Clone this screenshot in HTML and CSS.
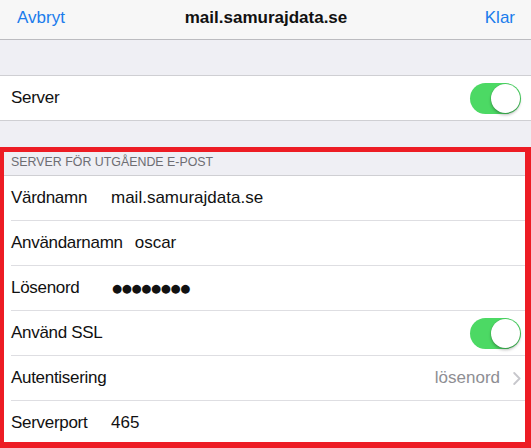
FILE: index.html
```html
<!DOCTYPE html>
<html lang="sv">
<head>
<meta charset="utf-8">
<title>mail.samurajdata.se</title>
<link rel="stylesheet" href="styles.css">
</head>
<body>
<div class="screen">
  <header class="navbar">
    <span class="nav-btn">Avbryt</span>
    <h1 class="nav-title">mail.samurajdata.se</h1>
    <span class="nav-btn nav-done">Klar</span>
  </header>

  <section class="group group-first">
    <div class="row">
      <div class="row-inner">
        <span class="label">Server</span>
        <span class="toggle"></span>
      </div>
    </div>
  </section>

  <div class="section-header">SERVER FÖR UTGÅENDE E-POST</div>

  <section class="group">
    <div class="row">
      <div class="row-inner">
        <span class="label">Värdnamn</span>
        <span class="value">mail.samurajdata.se</span>
      </div>
    </div>
    <div class="row">
      <div class="row-inner">
        <span class="label">Användarnamn</span>
        <span class="value">oscar</span>
      </div>
    </div>
    <div class="row">
      <div class="row-inner">
        <span class="label">Lösenord</span>
        <span class="value dots">●●●●●●●●</span>
      </div>
    </div>
    <div class="row">
      <div class="row-inner">
        <span class="label">Använd SSL</span>
        <span class="toggle"></span>
      </div>
    </div>
    <div class="row">
      <div class="row-inner">
        <span class="label">Autentisering</span>
        <span class="detail">lösenord</span>
        <svg class="chevron" width="8" height="13" viewBox="0 0 8 13"><path d="M1.2 1 L6.6 6.5 L1.2 12" fill="none" stroke="#c7c7cc" stroke-width="1.8" stroke-linecap="round" stroke-linejoin="round"/></svg>
      </div>
    </div>
    <div class="row">
      <div class="row-inner">
        <span class="label">Serverport</span>
        <span class="value">465</span>
      </div>
    </div>
  </section>

  <div class="highlight"></div>
</div>
</body>
</html>
```

FILE: styles.css
```css
html, body {
  margin: 0;
  padding: 0;
}

body {
  background: #efeff4;
  font-family: "Liberation Sans", Arial, sans-serif;
  font-size: 17px;
  color: #000;
  width: 531px;
  height: 448px;
  overflow: hidden;
}

.screen {
  position: relative;
  height: 448px;
  overflow: hidden;
}

.navbar {
  height: 35px;
  padding: 0 16px 4px 17px;
  display: grid;
  grid-template-columns: 1fr auto 1fr;
  align-items: center;
  background: #f7f7f7;
  border-bottom: 1px solid #bcbcc0;
}

.nav-btn {
  color: #1b7cec;
}

.nav-done {
  justify-self: end;
}

.nav-title {
  margin: 0;
  font-size: 17px;
  font-weight: 700;
  color: #111;
}

.group {
  background: #fff;
  border-top: 1px solid #cfcfd3;
  border-bottom: 1px solid #cfcfd3;
}

.group-first {
  margin-top: 35px;
}

.section-header {
  height: 54px;
  box-sizing: border-box;
  display: flex;
  align-items: flex-end;
  padding: 0 11px 6px;
  font-size: 12.4px;
  color: #6d6d72;
}

.row {
  padding-left: 11px;
}

.row-inner {
  height: 44px;
  display: flex;
  align-items: center;
  padding-right: 10px;
}

.row + .row .row-inner {
  border-top: 1px solid #dedee2;
}

.label {
  min-width: 88px;
  margin-right: 12px;
  letter-spacing: -0.3px;
  color: #111;
}

.value {
  color: #111;
}

.dots {
  font-family: "DejaVu Sans", sans-serif;
  font-size: 11.5px;
  letter-spacing: -0.3px;
  padding-left: 1px;
}

.detail {
  margin-left: auto;
  color: #8e8e93;
  margin-right: 13px;
}

.chevron {
  display: block;
}

.toggle {
  margin-left: auto;
  width: 51px;
  height: 31px;
  border-radius: 16px;
  background: #4cd964;
  position: relative;
}

.toggle::after {
  content: "";
  position: absolute;
  right: 1px;
  top: 1px;
  width: 29px;
  height: 29px;
  border-radius: 50%;
  background: #fff;
  box-shadow: 0 2px 3px rgba(0, 0, 0, 0.28), 0 0 0 0.5px rgba(0, 0, 0, 0.1);
}

.highlight {
  position: absolute;
  left: 0;
  top: 147px;
  width: 531px;
  height: 301px;
  box-sizing: border-box;
  border-style: solid;
  border-color: #ed1c24;
  border-width: 5px 6px 6px 4px;
  pointer-events: none;
}
```
